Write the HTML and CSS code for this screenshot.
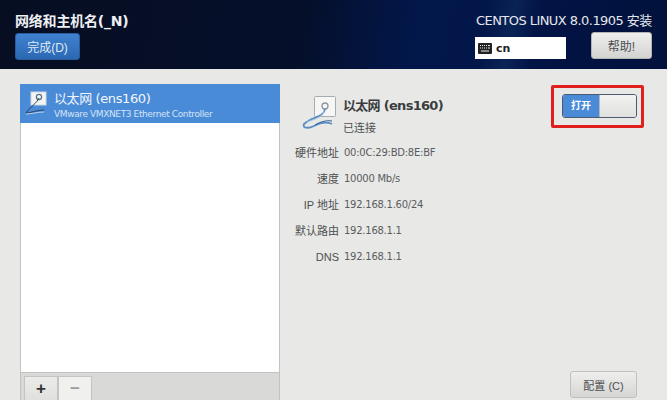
FILE: index.html
```html
<!DOCTYPE html>
<html lang="zh">
<head>
<meta charset="utf-8">
<title>网络和主机名</title>
<link rel="stylesheet" href="styles.css">
</head>
<body>
<header class="top">
  <div class="top-left">
    <h1 class="title">网络和主机名(_N)</h1>
    <button class="btn-done">完成(D)</button>
  </div>
  <div class="top-right">
    <div class="product">CENTOS LINUX 8.0.1905 安装</div>
    <div class="top-controls">
      <div class="kbd">
        <svg class="kbd-icon" width="14" height="11" viewBox="0 0 14 11"><rect x="0" y="0" width="14" height="11" rx="1" fill="#222"/><path d="M2 2.5h1M4 2.5h1M6 2.5h1M8 2.5h1M10 2.5h2M2 5h1M4 5h1M6 5h1M8 5h1M10 5h2M3 8h8" stroke="#eee" stroke-width="1.2"/></svg>
        <span>cn</span>
      </div>
      <button class="btn-help">帮助!</button>
    </div>
  </div>
</header>
<main class="content">
  <section class="list-panel">
    <div class="list">
      <div class="list-row">
        <svg class="row-icon" width="26" height="32" viewBox="0 0 26 32">
          <rect x="8" y="5" width="15" height="13" fill="#f4f4f2" stroke="#cfd8e4"/>
          <circle cx="16" cy="10" r="2.6" fill="none" stroke="#56708f" stroke-width="1.2"/>
          <path d="M16 11C14 16 7 20 3 26C7 26 15 23 21 23" fill="none" stroke="#26405f" stroke-width="1"/>
          <path d="M3 27C8 27 15 25 21 25" fill="none" stroke="#b9d0ea" stroke-width="1"/>
        </svg>
        <div class="row-text">
          <div class="row-name">以太网 (ens160)</div>
          <div class="row-sub">VMware VMXNET3 Ethernet Controller</div>
        </div>
      </div>
    </div>
    <div class="list-tools">
      <button class="tool tool-add">+</button>
      <button class="tool tool-del">−</button>
    </div>
  </section>
  <section class="detail">
    <div class="detail-top">
      <div class="device">
        <svg class="device-icon" width="42" height="40" viewBox="0 0 42 40">
          <rect x="14.5" y="3.5" width="21" height="20" rx="1" fill="#f6f6f4" stroke="#a9acaf"/>
          <circle cx="25" cy="13" r="3" fill="none" stroke="#8a97a8" stroke-width="1.3"/>
          <path d="M25 16C24 24 12 24 4 31C2 35 8 36 14 33C20 30 26 28 32 31" fill="none" stroke="#5b8cc0" stroke-width="1.8"/>
          <path d="M7 29C14 26 22 25 24 18" fill="none" stroke="#9fc0e2" stroke-width="1"/>
          <path d="M32 28C26 27 20 29 15 32" fill="none" stroke="#2f5f96" stroke-width="1"/>
        </svg>
        <div class="device-text">
          <div class="device-name">以太网 (ens160)</div>
          <div class="device-status">已连接</div>
        </div>
      </div>
      <div class="highlight">
        <div class="switch">
          <span class="switch-on">打开</span>
          <span class="switch-knob"></span>
        </div>
      </div>
    </div>
    <dl class="props">
      <dt>硬件地址</dt><dd>00:0C:29:BD:8E:BF</dd>
      <dt>速度</dt><dd>10000 Mb/s</dd>
      <dt>IP 地址</dt><dd>192.168.1.60/24</dd>
      <dt>默认路由</dt><dd>192.168.1.1</dd>
      <dt>DNS</dt><dd>192.168.1.1</dd>
    </dl>
    <div class="detail-foot">
      <button class="btn-config">配置 (C)</button>
    </div>
  </section>
</main>
</body>
</html>
```
FILE: styles.css
```css
* { box-sizing: border-box; }
html, body { margin: 0; height: 400px; overflow: hidden; }
body {
  width: 667px;
  background: #e8e8e7;
  font-family: "Liberation Sans", "Noto Sans CJK SC", sans-serif;
  color: #3a3d3d;
  display: flex;
  flex-direction: column;
}
button { font-family: inherit; padding: 0; cursor: default; }

.top {
  height: 69px;
  flex: none;
  display: flex;
  justify-content: space-between;
  padding: 0 15px;
  background: linear-gradient(100deg, #070e22 0%, #050f2a 45%, #02174a 62%, #03164a 72%, #0a2355 76%, #021345 80%, #02123c 100%);
}
.top-left { padding-top: 13px; }
.title {
  margin: 0 0 4px;
  font-size: 14px;
  line-height: 16px;
  font-weight: 700;
  color: #eef0f3;
  font-family: "DejaVu Sans", "Noto Sans CJK SC", sans-serif;
  letter-spacing: -0.2px;
}
.btn-done {
  display: block;
  width: 65px;
  height: 27px;
  border: 1px solid #2a5c9b;
  border-radius: 3px;
  background: linear-gradient(#3f82cf, #2b68b3);
  color: #dfe9f5;
  font-size: 12px;
}
.top-right {
  width: 177px;
  padding-top: 13px;
  display: flex;
  flex-direction: column;
}
.product {
  line-height: 16px;
  color: #e4e7ec;
  white-space: nowrap;
  margin-left: 1px;
  font-family: "DejaVu Sans", "Noto Sans CJK SC", sans-serif;
  font-size: 13px;
  letter-spacing: -0.55px;
}
.top-controls {
  margin-top: 3px;
  display: flex;
  justify-content: space-between;
  align-items: flex-start;
}
.kbd {
  margin-top: 5px;
  width: 91px;
  height: 22px;
  background: #fff;
  display: flex;
  align-items: center;
  gap: 4px;
  padding-left: 3px;
  color: #222;
  font-size: 11px;
  font-weight: 700;
  font-family: "DejaVu Sans", sans-serif;
}
.btn-help {
  width: 61px;
  height: 27px;
  border: 1px solid #b5b5b3;
  border-radius: 3px;
  background: linear-gradient(#efefee, #d3d3d2);
  color: #4c4f50;
  font-size: 12px;
}

.content {
  flex: 1;
  min-height: 0;
  display: flex;
  padding: 15px 30px 0 20px;
  gap: 20px;
}
.list-panel {
  width: 260px;
  flex: none;
  display: flex;
  flex-direction: column;
  border: 1px solid #c2c2c1;
  border-top: 0;
  border-bottom: 0;
}
.list { height: 288px; flex: none; background: #fff; }
.list-row {
  height: 39px;
  margin-left: -1px;
  margin-right: -1px;
  background: #4a8bd8;
  display: flex;
  align-items: center;
  gap: 5px;
  padding: 5px 0 0 3px;
  color: #fff;
}
.row-icon { flex: none; margin-top: -6px; }
.row-name { font-size: 13px; line-height: 16px; color: #f3f6fb; font-family: "DejaVu Sans", "Noto Sans CJK SC", sans-serif; letter-spacing: -0.4px; }
.row-sub { margin-top: 1px; font-size: 9px; line-height: 13px; color: #d5e3f5; white-space: nowrap; font-family: "DejaVu Sans", sans-serif; letter-spacing: -0.38px; }
.list-tools {
  flex: 1;
  display: flex;
  background: #d9d9d8;
  border-top: 1px solid #c2c2c1;
  padding: 3px 0 0 3px;
  align-items: stretch;
}
.tool {
  width: 34px;
  height: 40px;
  border: 1px solid #c4c4c3;
  border-bottom: 0;
  background: linear-gradient(#ebebea, #d8d8d7);
  font-size: 17px;
  font-weight: 700;
  line-height: 1;
  color: #333;
  padding-bottom: 16px;
}
.tool-del { background: #f0f0ef; color: #9b9b9b; }

.detail {
  flex: 1;
  min-width: 0;
  display: flex;
  flex-direction: column;
}
.detail-top {
  display: flex;
  justify-content: space-between;
  align-items: flex-start;
  height: 56px;
}
.device {
  display: flex;
  gap: 1px;
  padding-top: 9px;
}
.device-icon { flex: none; }
.device-text { padding-top: 5px; }
.device-name {
  font-size: 13px;
  line-height: 16px;
  font-weight: 700;
  color: #3a3d3d;
  font-family: "DejaVu Sans", "Noto Sans CJK SC", sans-serif;
  letter-spacing: -0.7px;
}
.device-status { margin-top: 7px; font-size: 11px; line-height: 14px; color: #4c4f4f; }
.highlight {
  margin-top: 1px;
  margin-right: -7px;
  width: 93px;
  height: 43px;
  border: 3px solid #e0201c;
  border-radius: 2px;
  padding: 6px 0 0 8px;
}
.switch {
  width: 75px;
  height: 24px;
  display: flex;
  border: 1px solid #4a5a70;
  border-radius: 3px;
  overflow: hidden;
  background: #ececeb;
}
.switch-on {
  width: 36px;
  background: #4a8bd8;
  color: #fff;
  font-size: 10px;
  font-weight: 700;
  text-align: center;
  line-height: 22px;
}
.switch-knob {
  flex: 1;
  background: linear-gradient(#f2f2f1, #e0e0df);
  border-left: 1px solid #b5bac0;
}
.props {
  margin: 6px 0 0 -5px;
  display: grid;
  grid-template-columns: 44px 1fr;
  column-gap: 5px;
  grid-auto-rows: 26px;
  font-size: 11px;
  line-height: 14px;
}
.props dt { text-align: right; color: #4c4f4f; }
.props dd { margin: 0; color: #5a5d5d; white-space: nowrap; font-family: "DejaVu Sans", sans-serif; font-size: 10px; letter-spacing: -0.25px; }
.detail-foot {
  margin-top: auto;
  display: flex;
  justify-content: flex-end;
}
.btn-config {
  width: 67px;
  height: 27px;
  margin-bottom: 2px;
  border: 1px solid #c0c0bf;
  border-radius: 3px;
  background: linear-gradient(#eeeeed, #d6d6d5);
  color: #4c4f50;
  font-size: 11px;
}
```
